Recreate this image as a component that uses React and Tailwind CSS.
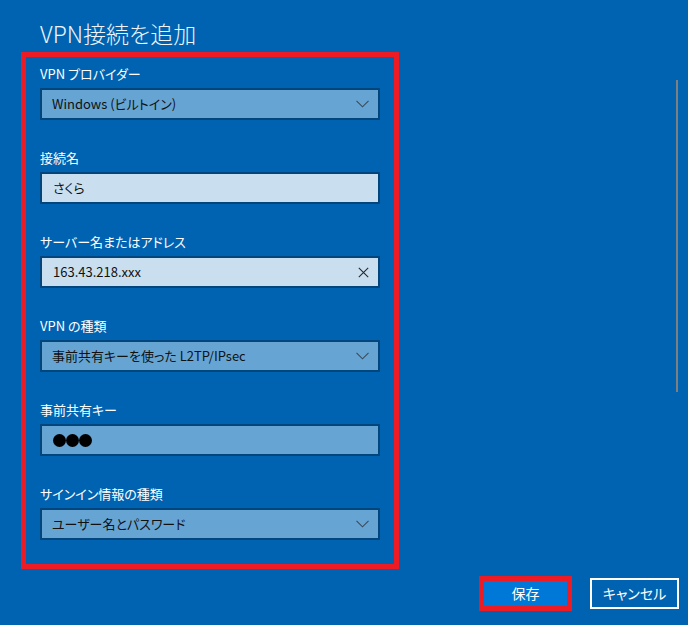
import React from 'react';

const font = { fontFamily: '"Noto Sans CJK JP", "Noto Sans", sans-serif' };

function Chevron() {
  return (
    <svg width="13" height="8" viewBox="0 0 13 8" className="shrink-0">
      <path d="M0.5 0.8 L6.5 6.8 L12.5 0.8" fill="none" stroke="#3b4a5a" strokeWidth="1.1" />
    </svg>
  );
}

function Clear() {
  return (
    <svg width="11" height="11" viewBox="0 0 11 11" className="shrink-0">
      <path d="M0.8 0.8 L10.2 10.2 M10.2 0.8 L0.8 10.2" fill="none" stroke="#2a2a2a" strokeWidth="1.1" />
    </svg>
  );
}

function Field({ label, children }) {
  return (
    <div className="flex flex-col">
      <div className="h-[20px] leading-[20px] text-[13px] text-white">{label}</div>
      <div className="mt-[4px]">{children}</div>
    </div>
  );
}

function Select({ value }) {
  return (
    <div className="h-[32px] w-[340px] border-2 border-[#00457c] bg-[#66a5d3] flex items-center justify-between pl-[10px] pr-[9px]">
      <span className="text-[13px] text-[#111]">{value}</span>
      <Chevron />
    </div>
  );
}

function TextBox({ value, clear }) {
  return (
    <div className="h-[32px] w-[340px] border-2 border-[#00457c] bg-[#c9dfef] flex items-center justify-between pl-[11px] pr-[9px]">
      <span className="text-[13px] text-[#111]">{value}</span>
      {clear && <Clear />}
    </div>
  );
}

export default function App() {
  return (
    <div
      className="relative w-[688px] h-[625px] bg-[#0063b1] overflow-hidden [font-feature-settings:'palt']"
      style={font}
    >
      <div className="pt-[18px] pl-[40px] h-[52px]">
        <h1 className="text-[23px] leading-[30px] font-light text-[#eef4fa]">VPN接続を追加</h1>
      </div>

      <div className="ml-[21px] w-[378px] border-[5px] border-[#ed1c24] pt-[7px] pb-[24px] px-[14px] flex flex-col gap-[28px]">
        <Field label="VPN プロバイダー">
          <Select value="Windows (ビルトイン)" />
        </Field>
        <Field label="接続名">
          <TextBox value="さくら" />
        </Field>
        <Field label="サーバー名またはアドレス">
          <TextBox value="163.43.218.xxx" clear />
        </Field>
        <Field label="VPN の種類">
          <Select value="事前共有キーを使った L2TP/IPsec" />
        </Field>
        <Field label="事前共有キー">
          <div className="h-[32px] w-[340px] border-2 border-[#00457c] bg-[#66a5d3] flex items-center pl-[11px]">
            <span className="w-[13px] h-[13px] rounded-full bg-black" />
            <span className="w-[13px] h-[13px] rounded-full bg-black" />
            <span className="w-[13px] h-[13px] rounded-full bg-black" />
          </div>
        </Field>
        <Field label="サインイン情報の種類">
          <Select value="ユーザー名とパスワード" />
        </Field>
      </div>

      <div className="mt-[7px] flex items-center justify-end gap-[18px] pr-[9px]">
        <button className="w-[93px] h-[35px] border-[5px] border-[#ed1c24] bg-[#0078d7] text-white text-[14px] flex items-center justify-center">
          保存
        </button>
        <button className="w-[89px] h-[31px] border-2 border-white text-white text-[14px] flex items-center justify-center">
          キャンセル
        </button>
      </div>

      <div className="absolute left-[676px] top-[80px] w-[2px] h-[312px] bg-[#7f7f7f]" />
    </div>
  );
}
